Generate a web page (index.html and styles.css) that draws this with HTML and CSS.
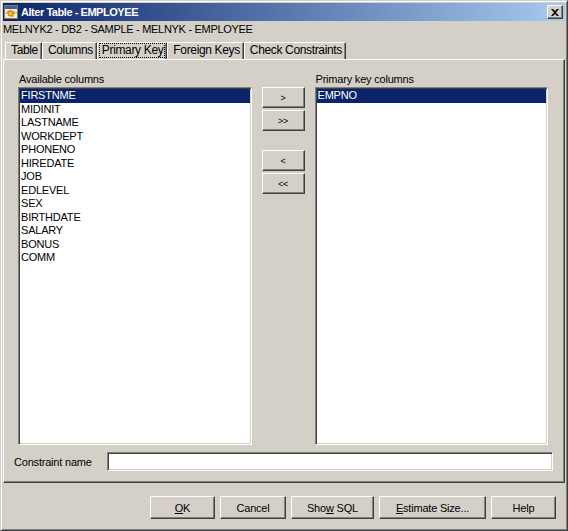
FILE: index.html
```html
<!DOCTYPE html>
<html>
<head>
<meta charset="utf-8">
<link rel="stylesheet" href="styles.css">
</head>
<body>
<div class="window">
  <div class="titlebar">
    <svg class="app-icon" width="14" height="14" viewBox="0 0 14 14">
      <rect x="0.5" y="0.5" width="13" height="13" fill="#f4ecd0" stroke="#8a7a50"/>
      <rect x="1" y="1" width="12" height="3" fill="#3a5ca8"/>
      <path d="M3 6 L7 5 L11 7 L9 12 L4 11 Z" fill="#e88a1a"/>
      <path d="M5 7 L8 7 L8 10 L5 10 Z" fill="#f8d040"/>
      <line x1="1" y1="8" x2="13" y2="8" stroke="#a09070" stroke-width="0.6"/>
    </svg>
    <span class="title-text">Alter Table - EMPLOYEE</span>
    <span class="close-btn">
      <svg width="8" height="7" viewBox="0 0 8 7"><path d="M0 0 L2 0 L4 2 L6 0 L8 0 L5 3.5 L8 7 L6 7 L4 5 L2 7 L0 7 L3 3.5 Z" fill="#000"/></svg>
    </span>
  </div>
  <div class="subtitle">MELNYK2 - DB2 - SAMPLE - MELNYK - EMPLOYEE</div>
  <div class="tabs">
    <div class="tab">Table</div>
    <div class="tab">Columns</div>
    <div class="tab active"><span class="focus">Primary Key</span></div>
    <div class="tab">Foreign Keys</div>
    <div class="tab">Check Constraints</div>
  </div>
  <div class="panel">
    <div class="lists-row">
      <div class="col">
        <div class="label">Available columns</div>
        <div class="listbox">
          <div class="item selected">FIRSTNME</div>
          <div class="item">MIDINIT</div>
          <div class="item">LASTNAME</div>
          <div class="item">WORKDEPT</div>
          <div class="item">PHONENO</div>
          <div class="item">HIREDATE</div>
          <div class="item">JOB</div>
          <div class="item">EDLEVEL</div>
          <div class="item">SEX</div>
          <div class="item">BIRTHDATE</div>
          <div class="item">SALARY</div>
          <div class="item">BONUS</div>
          <div class="item">COMM</div>
        </div>
      </div>
      <div class="mover">
        <div class="btn small"><span>&gt;</span></div>
        <div class="btn small"><span>&gt;&gt;</span></div>
        <div class="btn small spaced"><span>&lt;</span></div>
        <div class="btn small"><span>&lt;&lt;</span></div>
      </div>
      <div class="col">
        <div class="label">Primary key columns</div>
        <div class="listbox">
          <div class="item selected">EMPNO</div>
        </div>
      </div>
    </div>
    <div class="constraint-row">
      <span class="clabel">Constraint name</span>
      <div class="input"></div>
    </div>
  </div>
  <div class="footer">
    <div class="btn w65"><span><u>O</u>K</span></div>
    <div class="btn w66"><span>Cancel</span></div>
    <div class="btn w83"><span>Sho<u>w</u> SQL</span></div>
    <div class="btn w107"><span><u>E</u>stimate Size...</span></div>
    <div class="btn w65"><span>Help</span></div>
  </div>
</div>
</body>
</html>
```
FILE: styles.css
```css
html, body {
  margin: 0;
  padding: 0;
  background: #d4d0c8;
}
body {
  font-family: "Liberation Sans", Arial, sans-serif;
  font-size: 11px;
  letter-spacing: -0.2px;
  color: #000;
}
.window {
  width: 568px;
  height: 531px;
  box-sizing: border-box;
  border: 1px solid;
  border-color: #d4d0c8 #404040 #404040 #d4d0c8;
  box-shadow: inset 1px 1px #fff, inset -1px -1px #808080;
  padding: 2px;
  display: flex;
  flex-direction: column;
  background: #d4d0c8;
}
.titlebar {
  height: 18px;
  background: linear-gradient(to right, #0a246a, #a6caf0);
  display: flex;
  align-items: center;
  padding: 0 2px 0 1px;
}
.app-icon {
  flex: none;
  margin-right: 3px;
}
.title-text {
  color: #fff;
  font-weight: bold;
  font-size: 11px;
  letter-spacing: -0.45px;
  flex: 1;
}
.close-btn {
  width: 16px;
  height: 14px;
  box-sizing: border-box;
  background: #d4d0c8;
  border: 1px solid;
  border-color: #fff #404040 #404040 #fff;
  box-shadow: inset -1px -1px #808080;
  display: flex;
  align-items: center;
  justify-content: center;
}
.subtitle {
  height: 14px;
  line-height: 14px;
  margin-top: 1px;
  font-size: 11px;
  letter-spacing: -0.3px;
  white-space: nowrap;
}
.tabs {
  display: flex;
  margin-top: 6px;
  padding-left: 2px;
  height: 17px;
}
.tab {
  box-sizing: border-box;
  height: 17px;
  line-height: 15px;
  font-size: 12px;
  letter-spacing: -0.35px;
  padding: 0 3px 0 5px;
  border-top: 1px solid #fff;
  border-left: 1px solid #fff;
  border-right: 1px solid #404040;
  box-shadow: inset -1px 0 #808080;
  white-space: nowrap;
}
.tab.active {
  padding: 0 1px 0 1px;
}
.tab.active .focus {
  display: block;
  height: 15px;
  line-height: 14px;
  padding: 0 2px 0 3px;
  outline: 1px dotted #000;
  outline-offset: -1px;
}
.panel {
  height: 424px;
  box-sizing: border-box;
  border: 1px solid;
  border-color: #fff #404040 #404040 #fff;
  box-shadow: inset -1px -1px #808080;
  padding: 13px 11px 11px 10px;
  display: flex;
  flex-direction: column;
}
.lists-row {
  display: flex;
  margin: 0 5px 0 4px;
  gap: 10px;
  flex: 1;
}
.col {
  display: flex;
  flex-direction: column;
  flex: 1;
}
.label {
  height: 14px;
  line-height: 13px;
  padding-left: 1px;
}
.listbox {
  height: 358px;
  box-sizing: border-box;
  background: #fff;
  border: 1px solid;
  border-color: #808080 #fff #fff #808080;
  box-shadow: inset 1px 1px #404040, inset -1px -1px #d4d0c8;
  padding: 1px;
}
.item {
  height: 13.5px;
  line-height: 13px;
  padding-left: 1px;
  white-space: nowrap;
}
.item.selected {
  background: #0a246a;
  color: #fff;
}
.mover {
  width: 43px;
  display: flex;
  flex-direction: column;
  padding-top: 14px;
  gap: 2px;
}
.btn {
  box-sizing: border-box;
  background: #d4d0c8;
  border: 1px solid;
  border-color: #fff #404040 #404040 #fff;
  box-shadow: inset -1px -1px #808080;
  display: flex;
  align-items: center;
  justify-content: center;
  white-space: nowrap;
}
.btn.small {
  height: 21px;
  font-size: 9px;
}
.btn.spaced {
  margin-top: 17px;
}
.constraint-row {
  display: flex;
  align-items: center;
  margin-top: 7px;
}
.clabel {
  width: 93px;
  white-space: nowrap;
}
.input {
  flex: 1;
  height: 19px;
  box-sizing: border-box;
  background: #fff;
  border: 1px solid;
  border-color: #808080 #fff #fff #808080;
  box-shadow: inset 1px 1px #404040, inset -1px -1px #d4d0c8;
}
.footer {
  display: flex;
  justify-content: flex-end;
  gap: 5px;
  padding: 13px 9px 0 0;
}
.footer .btn {
  height: 23px;
}
.w65 { width: 65px; }
.w66 { width: 66px; }
.w83 { width: 83px; }
.w107 { width: 107px; }
u { text-decoration: underline; text-underline-offset: 1px; }
```
